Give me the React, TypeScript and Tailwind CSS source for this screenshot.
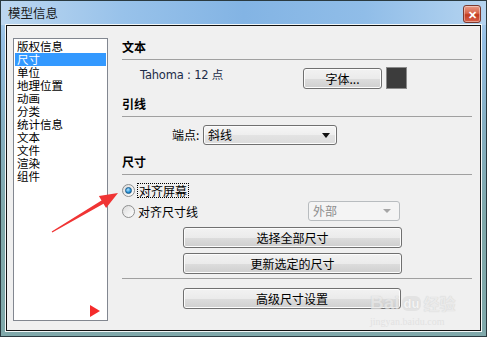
import React from "react";

const cjk = { fontFamily: '"Noto Sans CJK SC", "Liberation Sans", sans-serif' };

const listItems = ["版权信息", "尺寸", "单位", "地理位置", "动画", "分类", "统计信息", "文本", "文件", "渲染", "组件"];

const btnClass =
  "flex items-center justify-center rounded-[3px] border border-[#707070] bg-[linear-gradient(#f2f2f2_0%,#ebebeb_50%,#dddddd_51%,#cfcfcf_100%)] shadow-[inset_0_0_0_1px_#fcfcfc] text-[12px] text-black leading-none";

const Header = ({ title, mt }: { title: string; mt: string }) => (
  <div className={mt}>
    <div className="h-[16px] leading-[16px] text-[12px] font-bold text-black">{title}</div>
  </div>
);

const Rule = ({ mt }: { mt: string }) => <div className={`${mt} h-px w-[350px] bg-[#a0a0a0]`} />;

const Radio = ({ checked }: { checked?: boolean }) => (
  <div className="flex h-[13px] w-[13px] shrink-0 items-center justify-center rounded-full border border-[#8e8f8f] bg-[linear-gradient(135deg,#dcdcdc,#ffffff)]">
    {checked && <div className="h-[7px] w-[7px] rounded-full border border-[#1a5a8a] bg-[radial-gradient(circle_at_40%_35%,#b6e4ff,#1e8fd6_60%,#0a4f86)]" />}
  </div>
);

const App = () => {
  return (
    <div className="relative h-[337px] w-[487px] overflow-hidden" style={cjk}>
      <div className="flex h-full w-full flex-col border border-[#2a3a40] bg-[linear-gradient(#b2d2ef_0px,#95bfe4_40px,#86b0c4_120px,#7fa8aa_220px,#80a9ab_100%)]">
        {/* Title bar */}
        <div className="flex h-[24px] items-start justify-between bg-[linear-gradient(90deg,#bcd7f0_0%,#98c2ea_25%,#83b4e4_50%,#90bde8_75%,#b5d4f0_100%)]">
          <div className="pl-[7px] pt-[4px] text-[12.5px] leading-[15px] text-[#1b1b1b]">模型信息</div>
          <div className="mr-[5px] mt-[4px] flex h-[18px] w-[18px] items-center justify-center rounded-[3px] border border-[#7a3a30] bg-[linear-gradient(#e89a86_0%,#d8654a_45%,#c23a1f_55%,#d8614a_100%)] text-[11px] font-bold leading-none text-white shadow-[inset_0_0_0_1px_rgba(255,255,255,0.4)]">
            ✕
          </div>
        </div>

        {/* Client area */}
        <div className="mx-[5px] mb-[5px] flex flex-1 border border-[#111] bg-[#f0f0f0] pl-[6px] pt-[12px] shadow-[0_0_0_1px_#f4f8f8]">
          {/* List box */}
          <div className="relative h-[283px] w-[95px] shrink-0 border border-[#828790] bg-white px-px pt-[1px]">
            {listItems.map((it, i) => (
              <div
                key={it}
                className={`h-[13px] overflow-visible pl-[2px] text-[11.5px] leading-[13px] ${i === 1 ? "bg-[#3399ff] text-white" : "text-black"}`}
              >
                {it}
              </div>
            ))}
            <svg className="absolute left-[76px] top-[266px]" width="10" height="12" viewBox="0 0 10 12">
              <polygon points="0,0 10,6 0,12" fill="#f52b2b" />
            </svg>
          </div>

          {/* Right panel */}
          <div className="ml-[14px] flex w-[350px] flex-col">
            <Header title="文本" mt="mt-px" />
            <Rule mt="mt-[4px]" />
            <div className="mt-[7px] flex h-[22px] items-start pl-[18px]">
              <div className="whitespace-nowrap text-[11.5px] leading-[14px] text-[#1c2c48]" style={{ fontFamily: '"DejaVu Sans", "Noto Sans CJK SC", sans-serif', letterSpacing: "-0.2px" }}>
                Tahoma : 12 <span style={cjk}>点</span>
              </div>
              <div className="flex-1" />
              <div className={`${btnClass} mt-px h-[21px] w-[79px]`}>字体...</div>
              <div className="ml-[4px] h-[22px] w-[21px] border border-[#8a8a8a] bg-[#3c3c3c]" />
              <div className="w-[65px]" />
            </div>

            <Header title="引线" mt="mt-[7px]" />
            <Rule mt="mt-[4px]" />
            <div className="mt-[8px] flex h-[20px] items-center pl-[50px]">
              <div className="w-[28px] whitespace-nowrap text-[12px] text-black">端点:</div>
              <div className="ml-[3px] flex h-[20px] w-[134px] items-center justify-between rounded-[3px] border border-[#707070] bg-[linear-gradient(#f6f6f6_0%,#eeeeee_50%,#e3e3e3_51%,#dcdcdc_100%)] pl-[4px] pr-[6px] shadow-[inset_0_0_0_1px_#fcfcfc]">
                <span className="text-[12px] leading-none text-black">斜线</span>
                <svg width="8" height="5" viewBox="0 0 8 5">
                  <polygon points="0,0 8,0 4,5" fill="#111" />
                </svg>
              </div>
            </div>

            <Header title="尺寸" mt="mt-[9px]" />
            <Rule mt="mt-[4px]" />
            <div className="mt-[7px] flex h-[16px] items-center">
              <Radio checked />
              <div className="ml-[2px] border border-dotted border-black px-px text-[12px] leading-[13px] text-black">对齐屏幕</div>
            </div>
            <div className="mt-[3px] flex h-[20px] items-center">
              <Radio />
              <div className="ml-[3px] w-[60px] whitespace-nowrap text-[12px] leading-[13px] text-black">对齐尺寸线</div>
              <div className="ml-[110px] flex h-[20px] w-[92px] items-center justify-between rounded-[3px] border border-[#b8bcbf] bg-[#f4f4f4] pl-[4px] pr-[8px]">
                <span className="text-[12px] leading-none text-[#8d8d8d]">外部</span>
                <svg width="8" height="4" viewBox="0 0 8 4">
                  <polygon points="0,0 8,0 4,4" fill="#a6a6a6" />
                </svg>
              </div>
            </div>

            <div className={`${btnClass} ml-[61px] mt-[6px] h-[21px] w-[219px]`}>选择全部尺寸</div>
            <div className={`${btnClass} ml-[61px] mt-[5px] h-[21px] w-[219px]`}>更新选定的尺寸</div>
            <Rule mt="mt-[4px]" />
            <div className={`${btnClass} ml-[61px] mt-[9px] h-[21px] w-[218px]`}>高级尺寸设置</div>
          </div>
        </div>
      </div>

      {/* Baidu watermark */}
      <div className="pointer-events-none absolute left-[370px] top-[293px] flex flex-col items-start opacity-70">
        <div className="flex items-center gap-[2px] text-[19px] font-bold leading-[20px] text-[#e8e8e8]" style={{ fontFamily: '"Liberation Sans", sans-serif', textShadow: "0 0 1px #bdbdbd" }}>
          <span>Bai</span>
          <span className="rounded-[6px] bg-[#dedede] px-[2px] text-[13px] leading-[15px] text-[#f6f6f6]">du</span>
          <span className="text-[16px]" style={cjk}>经验</span>
        </div>
        <div className="mt-[3px] text-[10px] leading-[11px] text-[#dcdcdc]" style={{ fontFamily: '"Liberation Serif", serif' }}>
          jingyan.baidu.com
        </div>
      </div>

      {/* Red annotation arrow */}
      <svg className="pointer-events-none absolute left-0 top-0" width="487" height="337" viewBox="0 0 487 337">
        <polygon
          points="118,193 106.1,208.1 103.5,203.8 52.3,232.6 51.7,231.4 101.5,200.4 98.9,196.1"
          fill="#f03434"
        />
      </svg>
    </div>
  );
};

export default App;
